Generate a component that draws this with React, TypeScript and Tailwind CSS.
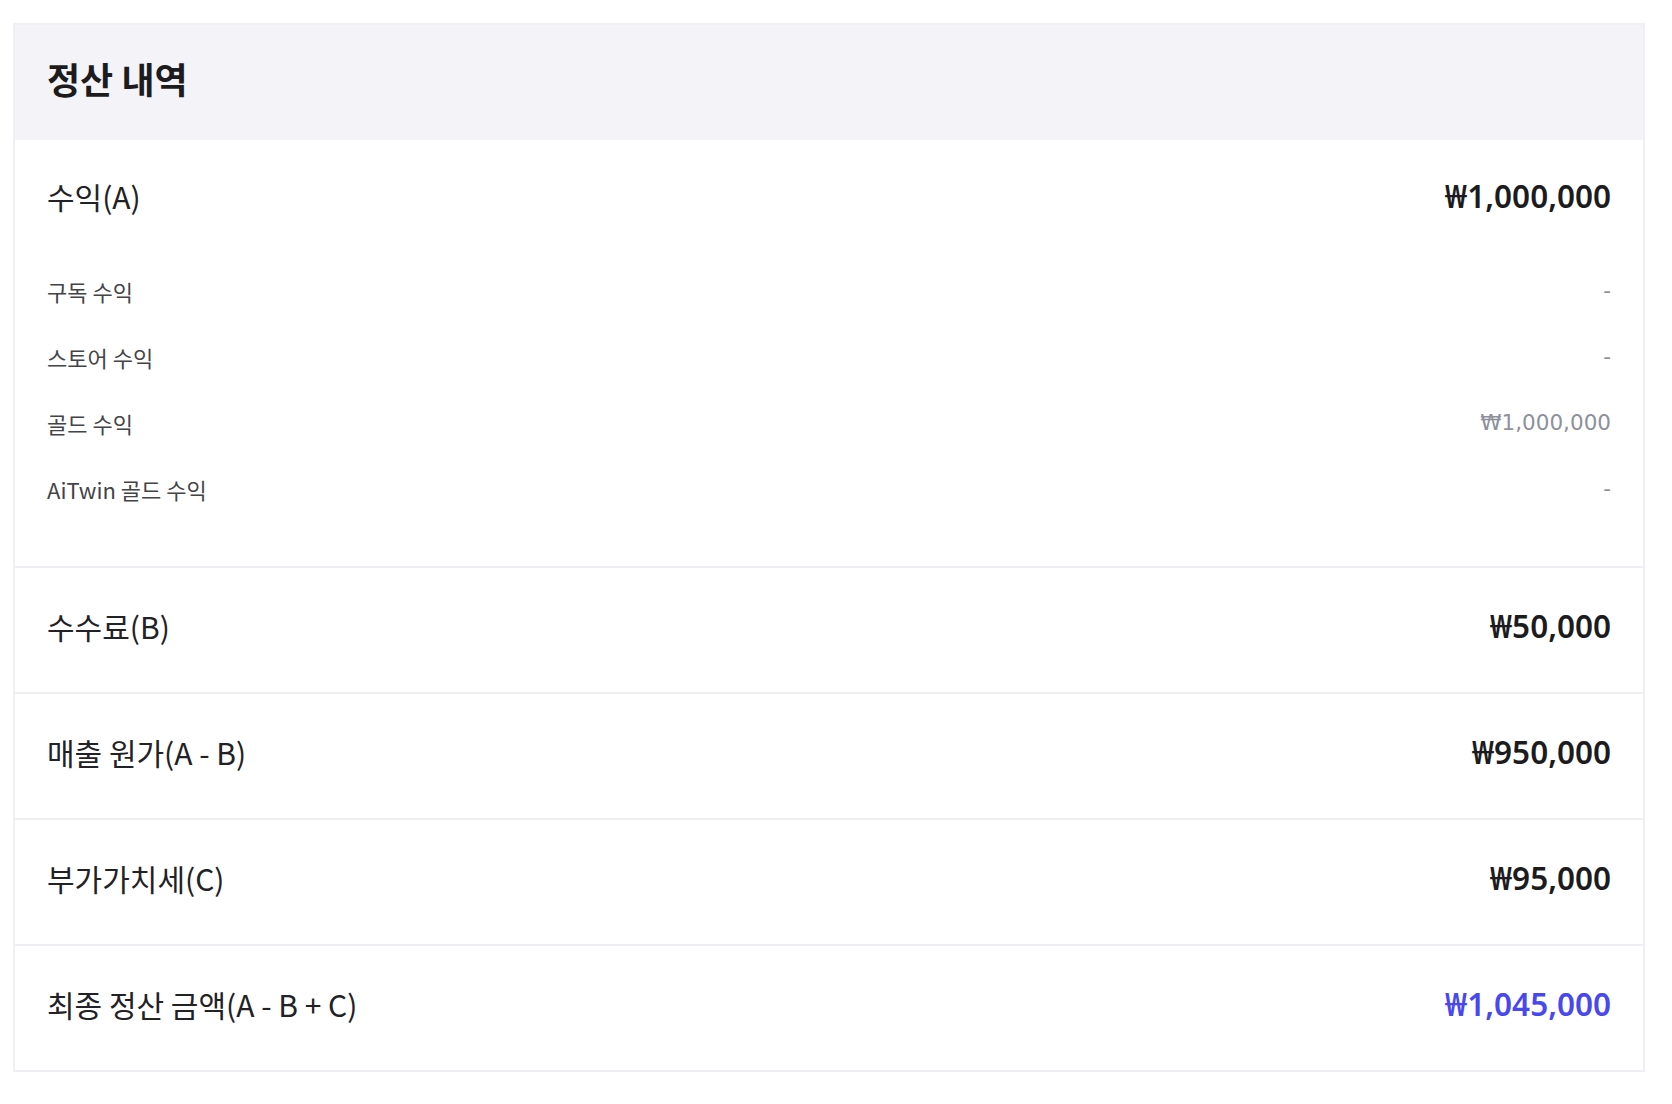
import React from 'react';

type SubItem = { label: string; value: string };
type Row = { label: string; value: string; highlight?: boolean };

const subItems: SubItem[] = [
  { label: '구독 수익', value: '-' },
  { label: '스토어 수익', value: '-' },
  { label: '골드 수익', value: '₩1,000,000' },
  { label: 'AiTwin 골드 수익', value: '-' },
];

const rows: Row[] = [
  { label: '수수료(B)', value: '₩50,000' },
  { label: '매출 원가(A - B)', value: '₩950,000' },
  { label: '부가가치세(C)', value: '₩95,000' },
  { label: '최종 정산 금액(A - B + C)', value: '₩1,045,000', highlight: true },
];

const krFont = "font-['Noto_Sans_CJK_KR','Noto_Sans',sans-serif]";
const numFont = "font-['Noto_Sans','Noto_Sans_CJK_KR',sans-serif]";
const subNumFont = "font-['DejaVu_Sans','Noto_Sans',sans-serif]";

const App = () => {
  return (
    <div className={`min-h-screen bg-white pt-[23px] pl-[13px] ${krFont}`}>
      <div className="w-[1632px] border-2 border-[#efeff5] bg-white">
        {/* Header */}
        <div className="h-[115px] bg-[#f3f3f8] flex items-center px-[32px] pb-[10px]">
          <h2 className="text-[36px] font-bold text-[#1c1c1f] leading-none">정산 내역</h2>
        </div>

        {/* Revenue (A) */}
        <div className="px-[32px] pt-[36px] pb-[62px] border-b-2 border-[#efeff5]">
          <div className="flex items-center justify-between h-[40px]">
            <span className="text-[30px] text-[#222226]">수익(A)</span>
            <span className={`${numFont} text-[31.5px] font-semibold text-[#1c1c1f]`}>₩1,000,000</span>
          </div>
          <div className="mt-[60px] flex flex-col gap-[36px]">
            {subItems.map((item) => (
              <div key={item.label} className="flex items-center justify-between h-[30px]">
                <span className="text-[22px] text-[#444448]">{item.label}</span>
                <span className={`${subNumFont} text-[21.5px] text-[#8e909c]`}>{item.value}</span>
              </div>
            ))}
          </div>
        </div>

        {rows.map((row, i) => (
          <div
            key={row.label}
            className={`px-[32px] pb-[8px] flex items-center justify-between ${
              i < rows.length - 1 ? 'h-[126px] border-b-2 border-[#efeff5]' : 'h-[124px]'
            }`}
          >
            <span className="text-[30px] text-[#222226]">{row.label}</span>
            <span
              className={`${numFont} text-[31.5px] font-semibold ${
                row.highlight ? 'text-[#4848ee]' : 'text-[#1c1c1f]'
              }`}
            >
              {row.value}
            </span>
          </div>
        ))}
      </div>
    </div>
  );
};

export default App;
